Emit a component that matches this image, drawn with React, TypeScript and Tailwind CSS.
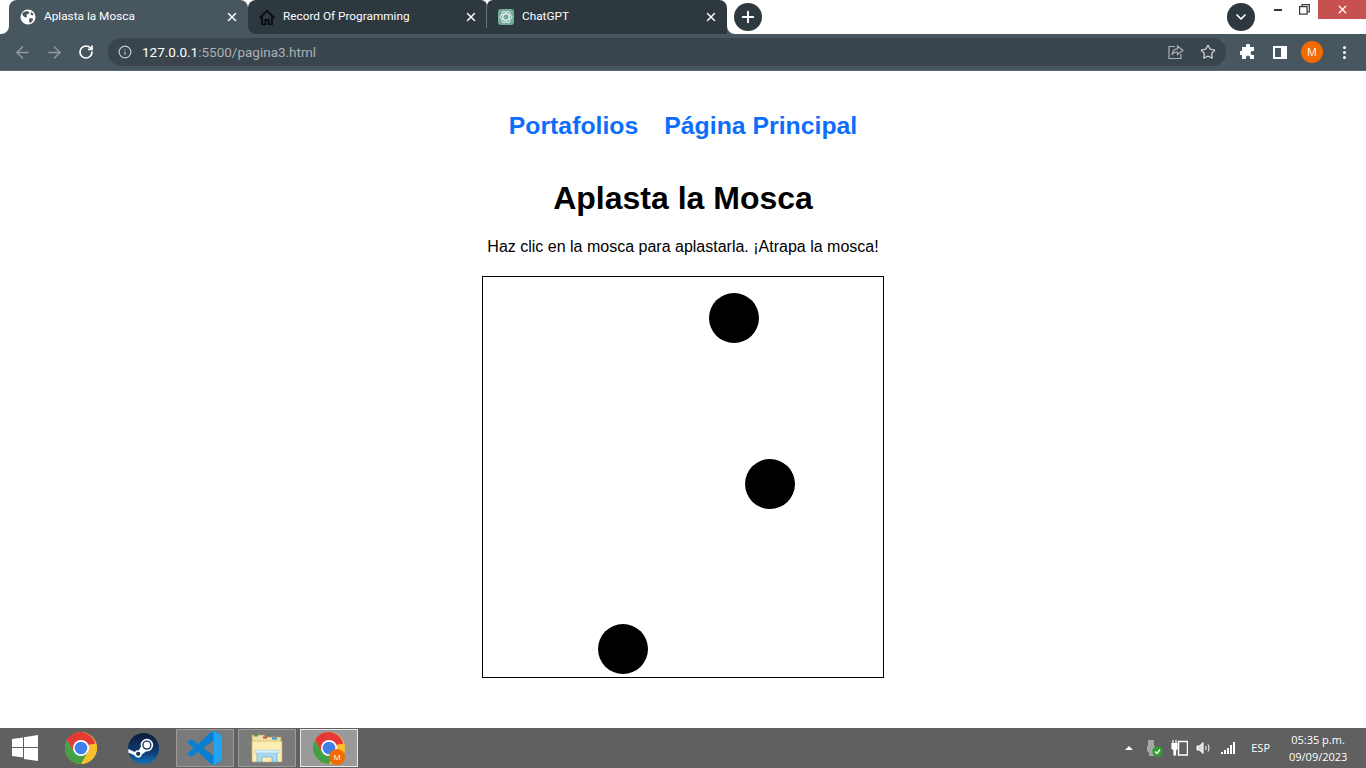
import React from "react";
import { ArrowLeft, ArrowRight, RotateCw, Info, Star, X, Plus, ChevronDown } from "lucide-react";

const ui = { fontFamily: '"Open Sans","Noto Sans",sans-serif' };
const tabFont = { fontFamily: 'Roboto,"Noto Sans",sans-serif' };

function Globe() {
  return (
    <svg width="16" height="16" viewBox="0 0 16 16" className="shrink-0">
      <circle cx="8" cy="8" r="7.500" fill="#fff" />
      <path d="M3 3.500 6.500 2l3 1-1 2-2 .5L7 8l-2 .5-3-3zM9.500 9l3.500.5-.5 2.500-2.500 2-1-1.500zM11 3l2.500 2-1 1.500-2-1z" fill="#47565f" />
    </svg>
  );
}
function HomeIcon() {
  return (
    <svg width="16" height="17" viewBox="0 0 17 17" className="shrink-0" fill="none" stroke="#080a0c" strokeWidth="1.800">
      <path d="M.6 8.800 8.500 1.400l7.900 7.400" />
      <path d="M3.200 7.500v8.200h3.600v-4.600h3.400v4.600h3.600V7.500" />
    </svg>
  );
}
function GptIcon() {
  return (
    <div className="w-4 h-4 rounded-[3px] bg-[#74aa9c] flex items-center justify-center shrink-0">
      <svg width="14" height="14" viewBox="0 0 12 12" fill="none" stroke="#e8f3f0" strokeWidth="0.800">
        <ellipse cx="6" cy="6" rx="5.200" ry="2.600" />
        <ellipse cx="6" cy="6" rx="5.200" ry="2.600" transform="rotate(60 6 6)" />
        <ellipse cx="6" cy="6" rx="5.200" ry="2.600" transform="rotate(120 6 6)" />
      </svg>
    </div>
  );
}
function Tab({ icon, title, className, inner, sep }: { icon: React.ReactNode; title: string; className: string; inner: string; sep?: boolean }) {
  return (
    <div className={"h-full bg-[linear-gradient(#fff_50%,#47565f_50%)] " + className}>
      <div className={"relative h-full flex items-center pl-[11px] pr-[9px] " + inner}>
        {icon}
        <span className="ml-[8px] flex-1 text-[11.800px] text-white whitespace-nowrap" style={tabFont}>{title}</span>
        <X size={14} strokeWidth={2.400} color="#fff" />
        {sep && <div className="absolute right-0 top-[5px] bottom-[6px] w-px bg-[#69757c]" />}
      </div>
    </div>
  );
}
function ChromeLogo({ size }: { size: number }) {
  return (
    <svg width={size} height={size} viewBox="0 0 32 32">
      <circle cx="16" cy="16" r="16" fill="#fbc02d" />
      <path d="M2.100 8A16 16 0 0 0 16 32l7-12-7-4-7 4z" fill="#43a047" />
      <path d="M16 0A16 16 0 0 0 2.100 8L9 20l7-4h14.900A16 16 0 0 0 16 0z" fill="#e53935" />
      <path d="M16 32A16 16 0 0 0 31.300 11.500L16 14l7 6z" fill="#fbc02d" />
      <circle cx="16" cy="16" r="8" fill="#fff" />
      <circle cx="16" cy="16" r="6.300" fill="#3f80ea" />
    </svg>
  );
}
function SteamLogo() {
  return (
    <svg width="31" height="31" viewBox="0 0 32 32">
      <defs>
        <linearGradient id="st" x1="0" y1="0" x2="0" y2="1">
          <stop offset="0" stopColor="#0f1c3a" />
          <stop offset="0.600" stopColor="#0c3a70" />
          <stop offset="1" stopColor="#1474b8" />
        </linearGradient>
      </defs>
      <circle cx="16" cy="16" r="16" fill="url(#st)" />
      <path d="M.4 16.500 8 20l2-.5 3.500-5.500 5 5-6 4.500-1 2-6-3-5.300-2.300z" fill="#fff" />
      <circle cx="19.500" cy="12.500" r="6.500" fill="#fff" />
      <circle cx="19.500" cy="12.500" r="4.800" fill="#103560" />
      <circle cx="19.500" cy="12.500" r="3.400" fill="#fff" />
      <circle cx="10.500" cy="21.500" r="3.800" fill="#fff" />
      <circle cx="10.500" cy="21.500" r="2.200" fill="#103560" />
    </svg>
  );
}
function VSCode() {
  return (
    <svg width="34" height="34" viewBox="0 0 100 100">
      <path d="M96.460 10.800 75.860.9a6.230 6.230 0 0 0-7.100 1.200L29.200 38.200 11.900 25.100a4.160 4.160 0 0 0-5.300.2L1.100 30.300a4.160 4.160 0 0 0 0 6.200L16 50 1.100 63.500a4.160 4.160 0 0 0 0 6.200l5.500 5a4.160 4.160 0 0 0 5.300.2l17.300-13.100 39.600 36.100a6.200 6.200 0 0 0 7.100 1.200l20.600-9.900A6.240 6.240 0 0 0 100 83.500v-67a6.240 6.240 0 0 0-3.540-5.700ZM75 72.700 45 50l30-22.700Z" fill="#0a7fd0" />
      <path d="M71 .5a6.200 6.200 0 0 1 4.860.4l20.600 9.900a6.240 6.240 0 0 1 3.540 5.700v67a6.240 6.240 0 0 1-3.540 5.600l-20.600 9.900a6.200 6.200 0 0 1-4.860.4 6 6 0 0 0 4-5.500V6a6 6 0 0 0-4-5.500z" fill="#23a3f3" />
    </svg>
  );
}
function Folder() {
  return (
    <svg width="34" height="32" viewBox="0 0 34 32">
      <path d="M2 3h12l2 2h15v9H2z" fill="#efe2a6" stroke="#b99c4a" strokeWidth="0.600" />
      <rect x="4" y="2.500" width="4" height="2" fill="#3aa655" />
      <rect x="13" y="4.500" width="4" height="2" fill="#c9483c" />
      <rect x="22" y="5.500" width="5" height="2" fill="#3a8fd9" />
      <path d="M2 9h30v20a1 1 0 0 1-1 1H3a1 1 0 0 1-1-1z" fill="#fbeeb4" stroke="#c7ab57" strokeWidth="0.600" />
      <path d="M7 30V20h20v10h-5v-5H12v5z" fill="#a9daf0" stroke="#5d9fc7" strokeWidth="0.600" />
      <path d="M5 18h24v3H5z" fill="#d8eff9" stroke="#7fb9d8" strokeWidth="0.400" />
    </svg>
  );
}
function TaskBtn({ children, active }: { children: React.ReactNode; active?: boolean }) {
  return (
    <div className={"relative w-[58px] h-[38px] flex items-center justify-center border " + (active ? "bg-[#9a9a9a] border-[#e8e8e8]" : "bg-[#7a7a7a] border-[#9a9a9a]")}>
      {children}
    </div>
  );
}

export default function App() {
  return (
    <div className="w-[1366px] h-[768px] flex flex-col overflow-hidden bg-white" style={{ fontFamily: '"Liberation Sans",Arial,sans-serif' }}>
      {/* tab strip */}
      <div className="h-[34px] flex bg-[#47565f] shrink-0">
        <div className="w-[9px] bg-white rounded-br-[8px]" />
        <Tab icon={<Globe />} title="Aplasta la Mosca" className="w-[239px]" inner="bg-[#47565f] rounded-t-[8px]" />
        <Tab icon={<HomeIcon />} title="Record Of Programming" className="w-[239px]" inner="bg-[#2e383f] rounded-tl-[8px] rounded-bl-[8px] rounded-tr-[6px]" sep />
        <Tab icon={<GptIcon />} title="ChatGPT" className="w-[240px]" inner="bg-[#2e383f] rounded-tl-[6px] rounded-tr-[8px]" />
        <div className="flex-1 bg-white rounded-bl-[8px] flex items-start">
          <div className="ml-[7px] mt-[3px] w-7 h-7 rounded-full bg-[#2e383f] flex items-center justify-center">
            <Plus size={18} strokeWidth={2.600} color="#fff" />
          </div>
          <div className="ml-[465px] mt-[3px] w-7 h-7 rounded-full bg-[#2e383f] flex items-center justify-center">
            <ChevronDown size={16} strokeWidth={2.600} color="#fff" />
          </div>
          <div className="flex-1 flex justify-end items-start">
            <div className="w-[26px] h-[19px] flex items-center justify-center mr-px"><div className="w-[8px] h-[2px] bg-[#2e383f]" /></div>
            <div className="w-[25px] h-[19px] flex items-center justify-center mr-px">
              <svg width="11" height="11" viewBox="0 0 11 11" fill="none" stroke="#2e383f" strokeWidth="1.200"><rect x="0.600" y="2.600" width="7.500" height="7.500" /><path d="M3 2.500V.7h7.300V8H8.200" /></svg>
            </div>
            <div className="w-[48px] h-[19px] bg-[#c75050] flex items-center justify-center"><X size={13} strokeWidth={2.400} color="#fff" /></div>
          </div>
        </div>
      </div>
      {/* toolbar */}
      <div className="h-[37px] shrink-0 bg-[#47565f] border-b border-[#5a6870] flex items-start pt-1 pl-[13px]">
        <div className="flex items-center h-7 gap-[13px]">
          <ArrowLeft size={19} strokeWidth={2} color="#8f999f" />
          <ArrowRight size={19} strokeWidth={2} color="#8f999f" />
          <RotateCw size={16} strokeWidth={2.600} color="#fff" className="ml-px" />
        </div>
        <div className="ml-[14px] w-[1118px] h-7 rounded-full bg-[#39444c] flex items-center pl-[10px] pr-[10px]">
          <Info size={14} strokeWidth={2} color="#c4cacd" />
          <div className="ml-[10px] text-[13.500px] flex-1 whitespace-nowrap" style={{ fontFamily: 'Roboto,"Open Sans",sans-serif' }}>
            <span className="text-white">127.0.0.1</span><span className="text-[#a9b1b6]">:5500/pagina3.html</span>
          </div>
          <svg width="16" height="16" viewBox="0 0 16 16" fill="none" stroke="#a9b1b6" strokeWidth="1.200" className="mr-[16px]">
            <path d="M7 2.500H1v12h12V10" /><path d="M9.500 2 15 6.500 9.500 10.500V8C7 8 5 9 4 11c.3-3.500 2.500-6 5.500-6.200z" />
          </svg>
          <Star size={16} strokeWidth={2} color="#c4cacd" />
        </div>
        <div className="flex items-center h-7">
          <svg width="16" height="16" viewBox="0 0 16 16" fill="#fff" className="ml-[14px]">
            <path d="M6 1.500a2 2 0 0 1 4 0V3h4v4h-1.500a2 2 0 0 0 0 4H14v4H10v-1.500a2 2 0 0 0-4 0V15H2v-4H.5a2 2 0 0 1 0-4H2V3h4z" />
          </svg>
          <div className="ml-[17px] w-[14px] h-[13px] border-[2px] border-white border-r-[6px]" />
          <div className="ml-[14px] w-[22px] h-[22px] rounded-full bg-[#f26b00] text-white text-[11px] flex items-center justify-center" style={ui}>M</div>
          <div className="ml-[20px] flex flex-col gap-[2px]">
            <div className="w-[3px] h-[3px] rounded-full bg-white" />
            <div className="w-[3px] h-[3px] rounded-full bg-white" />
            <div className="w-[3px] h-[3px] rounded-full bg-white" />
          </div>
        </div>
      </div>
      {/* page */}
      <div className="flex-1 flex flex-col items-center bg-white">
        <nav className="mt-[40px] flex gap-[26px] text-[24.800px] leading-[29px] font-bold text-[#0d6efd]">
          <a>Portafolios</a>
          <a>Página Principal</a>
        </nav>
        <h1 className="mt-[40px] text-[32px] leading-[37px] font-bold text-black">Aplasta la Mosca</h1>
        <p className="mt-[21px] text-[16px] leading-[18px] text-black">Haz clic en la mosca para aplastarla. ¡Atrapa la mosca!</p>
        <div className="relative mt-[20px] w-[402px] h-[402px] border border-black">
          <div className="absolute left-[226px] top-[16px] w-[50px] h-[50px] rounded-full bg-black" />
          <div className="absolute left-[262px] top-[182px] w-[50px] h-[50px] rounded-full bg-black" />
          <div className="absolute left-[115px] top-[347px] w-[50px] h-[50px] rounded-full bg-black" />
        </div>
      </div>
      {/* taskbar */}
      <div className="h-[40px] shrink-0 bg-[#606060] flex items-center">
        <div className="w-[50px] flex justify-center">
          <svg width="26" height="26" viewBox="0 0 26 26" fill="#fff"><path d="M0 4l11-1.500V12H0zM12 2.300 26 0v12H12zM0 13h11v9.500L0 21zM12 13h14v13l-14-2z" /></svg>
        </div>
        <div className="w-[62px] flex justify-center"><ChromeLogo size={32} /></div>
        <div className="w-[62px] flex justify-center"><SteamLogo /></div>
        <div className="ml-[2px] flex gap-[4px]">
          <TaskBtn><VSCode /></TaskBtn>
          <TaskBtn><Folder /></TaskBtn>
          <TaskBtn active>
            <ChromeLogo size={32} />
            <div className="absolute left-[28px] top-[19px] w-[16px] h-[16px] rounded-full bg-[#f26b00] text-white text-[8px] flex items-center justify-center" style={ui}>M</div>
          </TaskBtn>
        </div>
        <div className="flex-1 flex justify-end items-center">
          <div className="w-0 h-0 border-l-[4px] border-r-[4px] border-b-[4px] border-l-transparent border-r-transparent border-b-white mr-[13px]" />
          <svg width="17" height="17" viewBox="0 0 17 17" className="mr-[8px]">
            <path d="M2 0h6v6h1v5l-1 2v3H3v-3l-2-2V6h1z" fill="#a6a6a6" />
            <circle cx="11.500" cy="11.500" r="5.200" fill="#2f9e2f" />
            <path d="M9 11.500l2 2 3-4" fill="none" stroke="#fff" strokeWidth="1.400" />
          </svg>
          <svg width="17" height="16" viewBox="0 0 17 16" className="mr-[8px]" fill="none" stroke="#fff" strokeWidth="1.200">
            <rect x="7.500" y="1.500" width="9" height="13.500" strokeWidth="1.500" />
            <path d="M2 0v3M5 0v3" />
            <path d="M1 3.500h5v5l-1.500 1.500V15H3v-5L1 8.500z" fill="#fff" />
          </svg>
          <svg width="16" height="14" viewBox="0 0 16 14" className="mr-[9px]" fill="none" stroke="#fff" strokeWidth="1">
            <path d="M1 5h2.500L7 1.500v11L3.500 9H1z" fill="#ddd" />
            <path d="M9.500 5c.8 1 .8 3 0 4M12 3.500c1.300 2 1.300 5 0 7" />
          </svg>
          <div className="flex items-end gap-px h-[12px] mr-[16px]">
            <div className="w-[2px] h-[2px] bg-white" />
            <div className="w-[2px] h-[4px] bg-white" />
            <div className="w-[2px] h-[6px] bg-white" />
            <div className="w-[2px] h-[9px] bg-white" />
            <div className="w-[2px] h-[12px] bg-white" />
          </div>
          <span className="text-[11px] text-white mr-[19px]" style={ui}>ESP</span>
          <div className="text-[11px] leading-[17px] text-white text-center w-[58px] mr-[19px] whitespace-nowrap" style={ui}>
            <div>05:35 p.m.</div>
            <div>09/09/2023</div>
          </div>
        </div>
      </div>
    </div>
  );
}
